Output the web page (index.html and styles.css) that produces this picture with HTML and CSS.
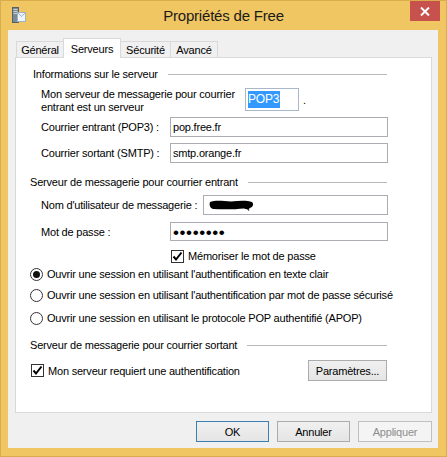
FILE: index.html
```html
<!DOCTYPE html>
<html lang="fr">
<head>
<meta charset="utf-8">
<title>Propriétés de Free</title>
<link rel="stylesheet" href="styles.css">
</head>
<body>
<div class="window">
  <div class="titlebar">
    <div class="tb-left">
      <svg class="appicon" width="14" height="16" viewBox="0 0 14 16">
        <rect x="0.5" y="0.5" width="6" height="15" fill="#7c8a96" stroke="#55606a"/>
        <rect x="1.5" y="2" width="4" height="1" fill="#c9d2d9"/>
        <rect x="1.5" y="4" width="4" height="1" fill="#c9d2d9"/>
        <rect x="1.5" y="6" width="4" height="1" fill="#c9d2d9"/>
        <rect x="5.5" y="5.5" width="8" height="9" fill="#eef4fa" stroke="#9fb3c6"/>
        <path d="M6 6 L9.5 9.5 L13 6" fill="none" stroke="#9fb3c6"/>
      </svg>
    </div>
    <div class="title">Propriétés de Free</div>
    <div class="tb-right">
      <div class="close">
        <svg width="10" height="9" viewBox="0 0 10 9"><path d="M1 0.5 L9 8.5 M9 0.5 L1 8.5" stroke="#fff" stroke-width="2"/></svg>
      </div>
    </div>
  </div>
  <div class="client">
    <div class="tabs">
      <div class="tab t1">Général</div>
      <div class="tab active t2">Serveurs</div>
      <div class="tab t3">Sécurité</div>
      <div class="tab t4">Avancé</div>
    </div>
    <div class="panel">
      <div class="ghead g1"><span>Informations sur le serveur</span><i class="rule"></i></div>
      <div class="row rtype">
        <div class="lbl ltype">Mon serveur de messagerie pour courrier<br>entrant est un serveur</div>
        <div class="field fpop"><span class="sel">POP3</span></div>
        <span class="dot">.</span>
      </div>
      <div class="row rin">
        <div class="lbl lsrv">Courrier entrant (POP3) :</div>
        <div class="field">pop.free.fr</div>
      </div>
      <div class="row rout">
        <div class="lbl lsrv">Courrier sortant (SMTP) :</div>
        <div class="field">smtp.orange.fr</div>
      </div>
      <div class="ghead g2"><span>Serveur de messagerie pour courrier entrant</span><i class="rule"></i></div>
      <div class="row ruser">
        <div class="lbl luser">Nom d'utilisateur de messagerie :</div>
        <div class="field">
          <svg class="blob" width="46" height="12" viewBox="0 0 46 12"><path d="M1 3 C6 1 14 2 22 2.5 C30 1.5 38 1 43 3 C45 5 44 8 41 9 C39 11 37 10 35 9.5 C26 10.5 14 10.5 4 10 C1 9 0 6 1 3 Z" fill="#000"/><path d="M38 9 L40 11.5" stroke="#000" stroke-width="1.2"/></svg>
        </div>
      </div>
      <div class="row rpass">
        <div class="lbl lsrv">Mot de passe :</div>
        <div class="field pw">••••••••</div>
      </div>
      <div class="row rmemo">
        <span class="check"><svg width="11" height="11" viewBox="0 0 11 11"><path d="M1.5 5.5 L4 8.5 L9.5 1.5" fill="none" stroke="#000" stroke-width="2"/></svg></span>
        <span class="ctext">Mémoriser le mot de passe</span>
      </div>
      <div class="row rradio r1">
        <span class="radio on"></span>
        <span class="ctext">Ouvrir une session en utilisant l'authentification en texte clair</span>
      </div>
      <div class="row rradio r2">
        <span class="radio"></span>
        <span class="ctext">Ouvrir une session en utilisant l'authentification par mot de passe sécurisé</span>
      </div>
      <div class="row rradio r3">
        <span class="radio"></span>
        <span class="ctext">Ouvrir une session en utilisant le protocole POP authentifié (APOP)</span>
      </div>
      <div class="ghead g3"><span>Serveur de messagerie pour courrier sortant</span><i class="rule"></i></div>
      <div class="row rauth">
        <span class="check"><svg width="11" height="11" viewBox="0 0 11 11"><path d="M1.5 5.5 L4 8.5 L9.5 1.5" fill="none" stroke="#000" stroke-width="2"/></svg></span>
        <span class="ctext">Mon serveur requiert une authentification</span>
        <button class="btn bparam" type="button">Paramètres...</button>
      </div>
    </div>
    <div class="buttons">
      <button class="btn default" type="button">OK</button>
      <button class="btn" type="button">Annuler</button>
      <button class="btn disabled" type="button">Appliquer</button>
    </div>
  </div>
</div>
</body>
</html>
```
FILE: styles.css
```css
* { box-sizing: border-box; }
html, body { margin: 0; padding: 0; }
body {
  width: 447px;
  height: 457px;
  overflow: hidden;
  font-family: "Liberation Sans", Arial, sans-serif;
  font-size: 11px;
  letter-spacing: -0.2px;
  color: #000;
  background: #F0C663;
}
.window {
  width: 447px;
  height: 457px;
  background: #F0C663;
  border: 1px solid #D9AC4C;
  display: flex;
  flex-direction: column;
}
.titlebar {
  height: 29px;
  display: grid;
  grid-template-columns: 1fr auto 1fr;
  align-items: start;
}
.tb-left { padding: 6px 0 0 11px; }
.appicon { display: block; }
.title {
  font-size: 15px;
  line-height: 18px;
  padding-top: 6px;
  color: #1a1a1a;
}
.tb-right { display: flex; justify-content: flex-end; padding-right: 6px; }
.close {
  width: 30px;
  height: 20px;
  background: #C7514C;
  display: flex;
  align-items: center;
  justify-content: center;
}
.close svg { display: block; }

.client {
  flex: 1;
  margin: 0 8px 8px 7px;
  background: #F0F0F0;
  padding: 8px 6px 6px 7px;
  display: flex;
  flex-direction: column;
}
.tabs {
  display: flex;
  align-items: flex-end;
  height: 20px;
  margin: 0 0 -1px 1px;
  position: relative;
  z-index: 1;
}
.tab {
  height: 16px;
  margin-bottom: 1px;
  border: 1px solid #D9D9D9;
  border-bottom: none;
  background: #F0F0F0;
  text-align: center;
  line-height: 16px;
  margin-left: -1px;
}
.tab.t1 { width: 48px; margin-left: 0; }
.tab.t2 { width: 58px; }
.tab.t3 { width: 51px; }
.tab.t4 { width: 48px; }
.tab.active {
  height: 20px;
  margin-bottom: 0;
  background: #fff;
  line-height: 20px;
  position: relative;
  z-index: 2;
  padding-bottom: 2px;
}
.panel {
  width: 417px;
  height: 356px;
  background: #fff;
  border: 1px solid #D9D9D9;
  padding: 9px 43px 0 14px;
  display: flex;
  flex-direction: column;
}
.ghead {
  height: 14px;
  display: flex;
  align-items: center;
  white-space: nowrap;
}
.ghead .rule {
  flex: 1;
  height: 1px;
  background: #B9B9B9;
  margin: 1px 1px 0 10px;
}
.ghead.g1 { margin-left: 3px; }
.ghead.g2 { margin-top: 12px; }
.ghead.g3 { margin-top: 13px; }

.row { display: flex; align-items: center; white-space: nowrap; }
.lbl { padding-left: 11px; flex: none; }
.rtype { margin-top: 7px; height: 26px; align-items: flex-start; }
.ltype { width: 215px; line-height: 13px; }
.rin { margin-top: 3px; height: 20px; }
.rout { margin-top: 6px; height: 20px; }
.ruser { margin-top: 6px; height: 20px; }
.rpass { margin-top: 7px; height: 19px; }
.lsrv { width: 140px; }
.luser { width: 173px; }
.field {
  flex: 1;
  height: 100%;
  border: 1px solid #ABADB3;
  background: #fff;
  padding-left: 2px;
  display: flex;
  align-items: center;
}
.fpop {
  flex: none;
  width: 54px;
  height: 23px;
  border-color: #A9B8C8;
}
.sel {
  background: #3399FF;
  color: #fff;
  padding: 1px 1px 1px 0;
  line-height: 15px;
  font-size: 12px;
}
.dot { margin: 6px 0 0 4px; }
.blob { display: block; margin-left: 3px; }
.pw {
  font-size: 17px;
  letter-spacing: 0.6px;
  line-height: 17px;
  padding-top: 1px;
}
.rmemo { margin-top: 8px; height: 14px; padding-left: 141px; }
.check {
  width: 13px;
  height: 13px;
  border: 1px solid #333;
  background: #fff;
  display: flex;
  align-items: center;
  justify-content: center;
  flex: none;
}
.check svg { display: block; }
.ctext { margin-left: 4px; }
.rradio { height: 14px; }
.r1 { margin-top: 4px; }
.r2 { margin-top: 7px; }
.r3 { margin-top: 9px; }
.radio {
  width: 13px;
  height: 13px;
  border-radius: 50%;
  border: 1px solid #333;
  background: #fff;
  flex: none;
  display: flex;
  align-items: center;
  justify-content: center;
}
.radio.on::after {
  content: "";
  width: 7px;
  height: 7px;
  border-radius: 50%;
  background: #111;
}
.rauth { margin-top: 8px; height: 21px; padding-left: 1px; }

.btn {
  font-family: inherit;
  font-size: 11px;
  letter-spacing: -0.2px;
  height: 21px;
  border: 1px solid #ACACAC;
  background: linear-gradient(#F0F0F0, #E5E5E5);
  color: #000;
  padding: 0;
  margin: 0;
}
.bparam { width: 79px; margin-left: auto; margin-right: 1px; }
.buttons {
  display: flex;
  justify-content: flex-end;
  gap: 8px;
  margin-top: 8px;
}
.buttons .btn { width: 73px; }
.buttons .btn.disabled { width: 74px; }
.btn.default { border-color: #3C7FB1; }
.btn.disabled {
  color: #8D8D8D;
  border-color: #BFBFBF;
  background: #F4F4F4;
}
```
